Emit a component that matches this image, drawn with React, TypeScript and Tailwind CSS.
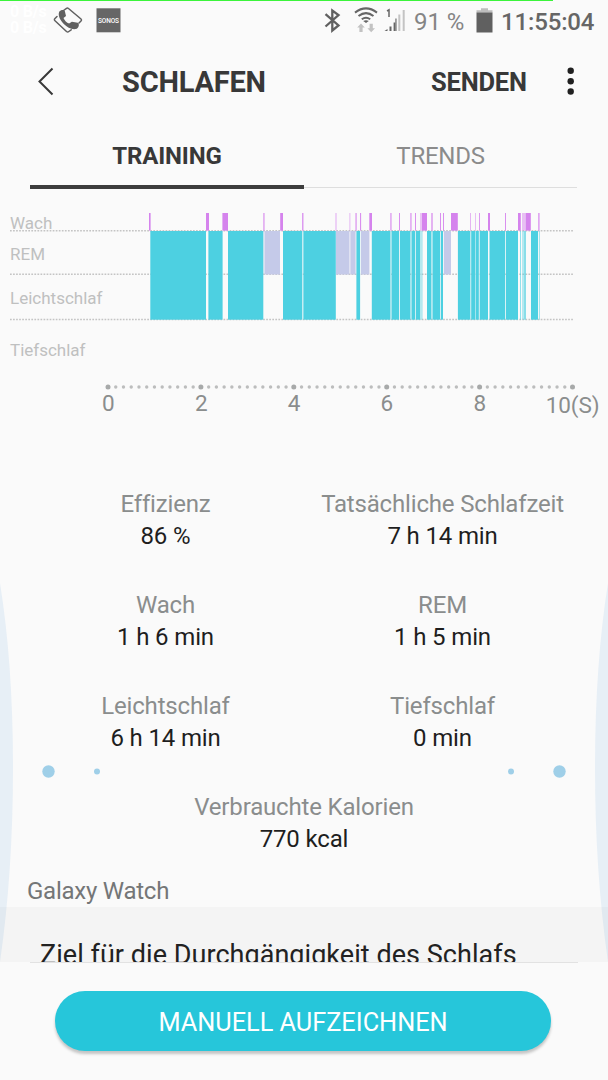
type Span = [start: number, end: number, opacity?: number];

const awake: Span[] = [
  [149, 150.6], [206, 209], [222.4, 228], [263, 264.8, 0.6], [280.2, 283], [302, 303.5, 0.8],
  [335, 337, 0.35], [349, 350.6, 0.35], [355.2, 357, 0.6], [360, 361.1, 0.9], [369.3, 372],
  [390, 391.8, 0.6], [399, 400, 0.9], [410, 411.8, 0.6], [415, 416, 0.9], [420, 422, 0.45],
  [422, 427], [431, 433, 0.6], [440, 441, 0.9], [443, 444, 0.9], [451, 457.8], [470, 471, 0.6],
  [475, 476, 0.5], [479, 480, 0.8], [488, 490], [505, 506, 0.9], [518, 520.8], [522, 525.7, 0.5],
  [525.7, 530.8], [538, 539.7, 0.7],
];

const rem: Span[] = [
  [263.5, 264.7, 0.5], [264.7, 280], [336, 349], [349, 350.4, 0.5], [350.4, 355.6], [361, 369.4], [443.8, 451],
];

const light: Span[] = [
  [150.3, 206], [208.4, 222.6], [228, 263.3], [283, 302], [302, 303.4, 0.3], [303.4, 335.8],
  [356.4, 360.1], [371.8, 390], [390, 391.8, 0.5], [391.8, 399], [399, 400, 0.15], [400, 410],
  [410, 411.7, 0.5], [411.7, 415], [415, 416, 0.25], [416, 420], [420, 422.7, 0.4],
  [427, 431], [431, 432.7, 0.45], [432.7, 440], [440, 441, 0.25], [441, 443], [457.9, 470],
  [470, 471.2, 0.4], [471.2, 475], [475, 476, 0.5], [476, 478.8], [478.8, 480, 0.35], [480, 488],
  [489.5, 505], [505, 506, 0.2], [506, 518], [520, 521, 0.6], [522, 524, 0.4], [524, 526, 0.65],
  [531, 538], [538.9, 540, 0.5],
];

const levels = [
  { label: 'Wach', y: 228.5 },
  { label: 'REM', y: 259.5 },
  { label: 'Leichtschlaf', y: 303.5 },
  { label: 'Tiefschlaf', y: 356 },
];

const hours = ['0', '2', '4', '6', '8', '10(S)'];

const stats = [
  { label: 'Effizienz', value: '86 %' },
  { label: 'Tatsächliche Schlafzeit', value: '7 h 14 min' },
  { label: 'Wach', value: '1 h 6 min' },
  { label: 'REM', value: '1 h 5 min' },
  { label: 'Leichtschlaf', value: '6 h 14 min' },
  { label: 'Tiefschlaf', value: '0 min' },
];

function Bars({ spans, y, height, fill }: { spans: Span[]; y: number; height: number; fill: string }) {
  return (
    <g fill={fill}>
      {spans.map(([start, end, opacity = 1]) => (
        <rect key={start} x={start} y={y} width={end - start} height={height} opacity={opacity} />
      ))}
    </g>
  );
}

function StatusBar() {
  return (
    <div className="relative h-[42px] shrink-0">
      <div className="h-[1px] w-[553px] bg-[#3bf43b]" />
      <div className="absolute top-[4px] left-[10px] text-[16px] leading-[16px] font-bold tracking-[-0.2px] text-white">
        <p>0 B/s</p>
        <p>0 B/s</p>
      </div>
      <svg className="absolute inset-0" width="608" height="42" fill="none">
        {/* rotating phone */}
        <g stroke="#606060" strokeWidth="1.5" strokeLinejoin="round" strokeLinecap="round">
          <path d="M63.5 10.500l3-2.200q1-.700 2 .2l12.500 10.500q1 1 0 2l-2 2" />
          <path d="M57 16.500l-2 2q-1.200 1.200 0 2.300l11.500 10.700q1.200 1 2.300 0l2.400-1.700" />
        </g>
        <path d="M59.200 11.800c1.500-2.400 5-2.400 5.600-.8l1.200 5-2.500 2c1 2.600 3.200 4.800 5.600 5.400l2.800-1.600 5.800 1c1.700.5 1.600 4.500-.9 6-4.500 1.200-9.300-.9-13-4.700-3.500-3.700-6.200-8.500-4.600-12.300z" fill="#606060" />
        <rect x="96.500" y="8.300" width="24" height="24" fill="#666" />
        <text x="108.500" y="23" textAnchor="middle" textLength="21" fill="#fff" fontSize="6.500" fontWeight="500">SONOS</text>
        {/* bluetooth */}
        <path d="M325.500 14.200l13 11.300-6.200 5v-20l6.200 4.500-13 11.500" stroke="#606060" strokeWidth="2.300" />
        {/* wifi */}
        <g stroke="#666" strokeWidth="2">
          <path d="M355 12.600q11-8.400 22 0" />
          <path d="M358.500 16q7.500-5.800 15 0" />
          <path d="M361.800 19.300q4.200-3.200 8.400 0" />
        </g>
        <path d="M363.200 20.900q2.800-1.500 5.600 0l-2.800 2z" fill="#666" />
        <path d="M361 23.500l3.800 4h-2.200v4.500h-3.200v-4.500h-2.200zM371.200 32.300l-3.800-4h2.200v-4.500h3.200v4.500h2.200z" fill="#c2c2c2" />
        {/* signal */}
        <path d="M387 11l2-1.200v7.200" stroke="#666" strokeWidth="1.500" />
        <path d="M384.500 31l3-2v2zM389.500 26.500h2v4.500h-2zM393.600 22.500h2v8.500h-2z" fill="#666" />
        <path d="M395.200 18.500h1.500v12.500h-1.500z" fill="#888" />
        <path d="M398.300 14.500h2v16.500h-2zM402.700 10h2v21h-2z" fill="#c4c4c4" />
        {/* battery */}
        <path d="M481 8.300h7v2h4.500v2.500h-16v-2.500h4.500z" fill="#bdbdbd" />
        <path d="M476.500 12.500h16v20h-16z" fill="#606060" />
      </svg>
      <p className="absolute top-[6.500px] left-[414px] text-[24px] leading-[30px] tracking-[-0.1px] whitespace-nowrap text-[#858585]">91 %</p>
      <p className="absolute top-[6.500px] left-[501px] text-[24px] leading-[30px] font-medium tracking-[-0.150px] whitespace-nowrap text-[#666]">11:55:04</p>
    </div>
  );
}

function SleepChart() {
  return (
    <svg className="block shrink-0" width="608" height="230" viewBox="0 200 608 230">
      {[230.7, 274.3, 319.5].map((y) => (
        <line key={y} x1="10" x2="573" y1={y} y2={y} stroke="#c4c4c4" strokeWidth="1.400" strokeDasharray="1.700 1.350" />
      ))}
      <Bars spans={awake} y={213} height={17.6} fill="#d583ed" />
      <Bars spans={rem} y={231} height={43.5} fill="#c5cae9" />
      <Bars spans={light} y={231} height={88.7} fill="#4dd0e1" />

      {levels.map(({ label, y }) => (
        <text key={label} x="10" y={y} fontSize="17" fill="#bfc0c0">{label}</text>
      ))}

      {Array.from({ length: 61 }, (_, i) => (
        <circle key={i} cx={108 + i * 7.742} cy="387" r={i % 12 === 0 ? 2.500 : 1.700} fill={i % 12 === 0 ? '#a7a9a9' : '#bcbdbd'} />
      ))}
      {hours.map((hour, i) => (
        <text key={hour} x={108.300 + i * 92.850} y={i === 5 ? 413 : 411} textAnchor="middle" fontSize="22.500" letterSpacing="-0.100" fill="#8a8d8d">
          {hour}
        </text>
      ))}
    </svg>
  );
}

function Stat({ label, value }: { label: string; value: string }) {
  return (
    <div className="h-[101px] text-center text-[24px] leading-[32px] whitespace-nowrap">
      <p className="tracking-[-0.170px] text-[#8a8d8d]">{label}</p>
      <p className="tracking-[-0.150px] text-[#1e1e1e]">{value}</p>
    </div>
  );
}

export default function App() {
  return (
    <div className="relative flex h-[1080px] w-[608px] flex-col overflow-hidden bg-[#fafafa] font-['Roboto',sans-serif]">
      <StatusBar />

      <header className="flex h-[78px] shrink-0 items-center text-[#383838]">
        <svg className="ml-[36px]" width="20" height="30" fill="none">
          <path d="M16.500 2.500L3.500 15.500l13 13" stroke="#383838" strokeWidth="2" />
        </svg>
        <h1 className="ml-[66px] w-[309px] pt-[3px] text-[29px] font-bold tracking-[-0.200px]">SCHLAFEN</h1>
        <button className="w-[96px] pt-[3px] text-left text-[25.500px] font-bold tracking-[-0.200px]">SENDEN</button>
        <svg className="ml-[39px]" width="10" height="30" fill="#202020">
          <circle cx="4.700" cy="4.800" r="3.200" />
          <circle cx="4.700" cy="15.200" r="3.200" />
          <circle cx="4.700" cy="25.500" r="3.200" />
        </svg>
      </header>

      <nav className="mx-[30px] mt-[2px] flex h-[67px] shrink-0 text-[24px] leading-[69px]">
        <div className="w-[274px] border-b-4 border-[#3d3d3d] text-center font-bold tracking-[-0.150px] text-[#383838]">TRAINING</div>
        <div className="mb-px w-[273px] border-b border-[#dedede] text-center tracking-[-0.250px] text-[#8b8b8b]">TRENDS</div>
      </nav>

      <div className="mt-[11px] shrink-0">
        <SleepChart />
      </div>

      {/* decorative halo behind the summary */}
      <svg className="absolute top-0 left-0" width="608" height="962">
        <path d="M0 583Q13 664 13 768T0 962zM608 583Q595 664 595 768T608 962z" fill="#e7eff6" />
        <g fill="#9fcfe8">
          <circle cx="48.500" cy="771.500" r="6.200" />
          <circle cx="97" cy="771.500" r="3" />
          <circle cx="511" cy="771.500" r="3" />
          <circle cx="559.500" cy="771.500" r="6.200" />
        </g>
      </svg>

      <section className="relative mx-[27px] mt-[58px] shrink-0">
        <div className="grid grid-cols-2">
          {stats.map((stat) => (
            <Stat key={stat.label} {...stat} />
          ))}
        </div>
        <Stat label="Verbrauchte Kalorien" value="770 kcal" />
      </section>

      <p className="absolute top-[875px] left-[27px] text-[24px] leading-[32px] tracking-[-0.250px] text-[#747677]">Galaxy Watch</p>
      <section className="absolute top-[906.500px] left-0 h-[55.500px] w-full overflow-hidden bg-black/[0.025]">
        <h2 className="mt-[29px] ml-[40px] text-[27px] leading-[38px] tracking-[0.040px] whitespace-nowrap text-[#222]">
          Ziel für die Durchgängigkeit des Schlafs
        </h2>
      </section>

      <footer className="absolute bottom-0 left-0 h-[118px] w-full bg-[#fafafa]">
        <div className="mx-[30px] h-px bg-[#e2e2e2]" />
        <button className="mt-[28px] ml-[55px] h-[60px] w-[496px] rounded-full bg-[#26c6da] pt-[3px] text-[25.300px] text-white shadow-[0_3px_3px_rgba(0,0,0,0.22)]">
          MANUELL AUFZEICHNEN
        </button>
      </footer>
    </div>
  );
}
